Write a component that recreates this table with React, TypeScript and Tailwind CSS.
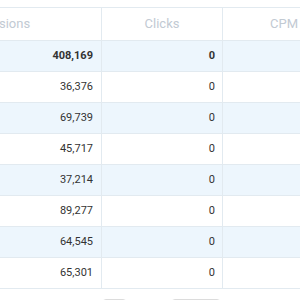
import React from "react";

type Row = { impressions: string; clicks: string; cpm: string; total?: boolean };

const rows: Row[] = [
  { impressions: "408,169", clicks: "0", cpm: "", total: true },
  { impressions: "36,376", clicks: "0", cpm: "" },
  { impressions: "69,739", clicks: "0", cpm: "" },
  { impressions: "45,717", clicks: "0", cpm: "" },
  { impressions: "37,214", clicks: "0", cpm: "" },
  { impressions: "89,277", clicks: "0", cpm: "" },
  { impressions: "64,545", clicks: "0", cpm: "" },
  { impressions: "65,301", clicks: "0", cpm: "" },
];

const App: React.FC = () => {
  return (
    <div className="w-[300px] h-[300px] overflow-hidden bg-white font-['Roboto',sans-serif]">
      <div className="pt-[7px] -ml-[112px] w-[460px]">
        <div className="flex h-[34px] border-y border-[#e2eaf0] text-[13px] text-[#c2cad3]">
          <div className="w-[214px] border-r border-[#e2eaf0] flex items-center justify-center">
            Impressions
          </div>
          <div className="w-[121px] border-r border-[#e2eaf0] flex items-center justify-center">
            Clicks
          </div>
          <div className="w-[122px] flex items-center justify-center">CPM</div>
        </div>

        {rows.map((row, i) => (
          <div
            key={i}
            className={`flex h-[31px] border-b border-[#e2eaf0] text-[11px] text-[#333333] ${
              i % 2 === 0 ? "bg-[#edf6fd]" : "bg-white"
            } ${row.total ? "font-bold text-[#222222]" : ""}`}
          >
            <div className="w-[214px] border-r border-[#e2eaf0] flex items-center justify-end pr-2">
              {row.impressions}
            </div>
            <div className="w-[121px] border-r border-[#e2eaf0] flex items-center justify-end pr-[7px]">
              {row.clicks}
            </div>
            <div className="w-[122px] flex items-center justify-end pr-2">{row.cpm}</div>
          </div>
        ))}
      </div>

      <div className="flex mt-[10px] ml-[102px] gap-[44px]">
        <div className="w-[25px] h-[28px] rounded-[4px] border border-[#dcdcdc] bg-white" />
        <div className="w-[50px] h-[28px] rounded-[4px] border border-[#dcdcdc] bg-white" />
      </div>
    </div>
  );
};

export default App;
